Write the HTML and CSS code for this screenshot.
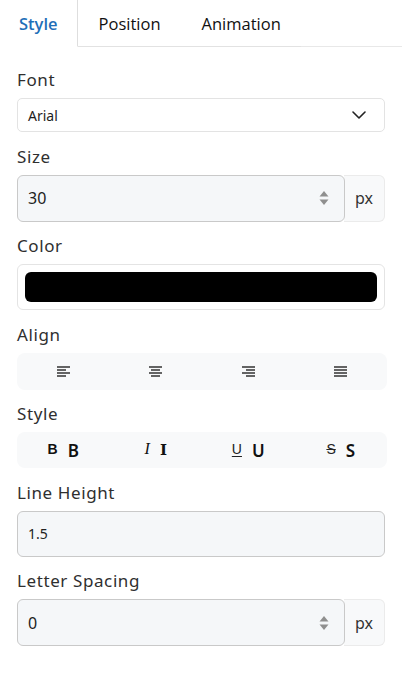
FILE: index.html
```html
<!DOCTYPE html>
<html>
<head>
<meta charset="utf-8">
<link rel="stylesheet" href="styles.css">
</head>
<body>
<div class="panel">
  <div class="tabs">
    <div class="tab active">Style</div>
    <div class="tab">Position</div>
    <div class="tab">Animation</div>
    <div class="tab-fill"></div>
  </div>
  <div class="content">
    <div class="group">
      <div class="label">Font</div>
      <div class="select">
        <span class="select-text">Arial</span>
        <svg class="chev" width="14" height="8" viewBox="0 0 14 8"><path d="M1 1l6 6 6-6" fill="none" stroke="#222" stroke-width="1.6" stroke-linecap="round" stroke-linejoin="round"/></svg>
      </div>
    </div>
    <div class="group">
      <div class="label">Size</div>
      <div class="input-group">
        <div class="input num">
          <span class="val">30</span>
          <svg class="spin" width="10" height="16" viewBox="0 0 10 16"><path d="M5 1L9.5 6.5H0.5Z" fill="#8f8f8f"/><path d="M5 15L9.5 9.5H0.5Z" fill="#8f8f8f"/></svg>
        </div>
        <div class="addon">px</div>
      </div>
    </div>
    <div class="group">
      <div class="label">Color</div>
      <div class="color-box"><div class="swatch"></div></div>
    </div>
    <div class="group">
      <div class="label">Align</div>
      <div class="btn-bar align-bar">
        <div class="btn"><svg width="13" height="11" viewBox="0 0 13 11"><path d="M0 1h13M0 4h9M0 7h13M0 10h9" stroke="#333" stroke-width="1.3"/></svg></div>
        <div class="btn"><svg width="13" height="11" viewBox="0 0 13 11"><path d="M0 1h13M2 4h9M0 7h13M2 10h9" stroke="#333" stroke-width="1.3"/></svg></div>
        <div class="btn"><svg width="13" height="11" viewBox="0 0 13 11"><path d="M0 1h13M4 4h9M0 7h13M4 10h9" stroke="#333" stroke-width="1.3"/></svg></div>
        <div class="btn"><svg width="13" height="11" viewBox="0 0 13 11"><path d="M0 1h13M0 4h13M0 7h13M0 10h13" stroke="#333" stroke-width="1.3"/></svg></div>
      </div>
    </div>
    <div class="group">
      <div class="label">Style</div>
      <div class="btn-bar style-bar">
        <div class="btn"><span class="ico ico-b">B</span><span class="ltr">B</span></div>
        <div class="btn"><span class="ico ico-i">I</span><span class="ltr serif">I</span></div>
        <div class="btn"><span class="ico ico-u">U</span><span class="ltr">U</span></div>
        <div class="btn"><span class="ico ico-s">S</span><span class="ltr">S</span></div>
      </div>
    </div>
    <div class="group">
      <div class="label">Line Height</div>
      <div class="input full"><span class="val small">1.5</span></div>
    </div>
    <div class="group">
      <div class="label">Letter Spacing</div>
      <div class="input-group">
        <div class="input num">
          <span class="val">0</span>
          <svg class="spin" width="10" height="16" viewBox="0 0 10 16"><path d="M5 1L9.5 6.5H0.5Z" fill="#8f8f8f"/><path d="M5 15L9.5 9.5H0.5Z" fill="#8f8f8f"/></svg>
        </div>
        <div class="addon">px</div>
      </div>
    </div>
  </div>
</div>
</body>
</html>
```
FILE: styles.css
```css
html, body {
  margin: 0;
  padding: 0;
  background: #fff;
}
body {
  font-family: "Noto Sans", "DejaVu Sans", sans-serif;
  color: #2b2b2b;
}
.panel {
  width: 402px;
}
.tabs {
  display: flex;
  height: 47px;
}
.tab {
  box-sizing: border-box;
  height: 47px;
  display: flex;
  align-items: center;
  padding: 0 20px 0 21px;
  font-family: "Open Sans", "Noto Sans", sans-serif;
  font-size: 16.5px;
  color: #111;
  border-bottom: 1px solid #e2e2e2;
}
.tab.active {
  color: #1f6fb8;
  font-weight: 600;
  padding: 0 19px 0 19px;
  border-right: 1px solid #dedede;
  border-bottom: 1px solid transparent;
}
.tab-fill {
  flex: 1;
  border-bottom: 1px solid #e8e8e8;
}
.content {
  padding: 21px 17px 0 17px;
  display: flex;
  flex-direction: column;
  gap: 12.5px;
}
.group {
  display: flex;
  flex-direction: column;
  gap: 6px;
}
.label {
  font-size: 17px;
  line-height: 24px;
  color: #2f2f2f;
  letter-spacing: 0.6px;
}
.select {
  box-sizing: border-box;
  height: 34px;
  width: 368px;
  border: 1px solid #e3e3e3;
  border-radius: 5px;
  background: #fff;
  display: flex;
  align-items: center;
  justify-content: space-between;
  padding: 0 18px 0 10px;
}
.select-text {
  font-size: 14px;
  color: #1e1e1e;
}
.input-group {
  display: flex;
  width: 368px;
}
.input {
  box-sizing: border-box;
  height: 47px;
  background: #f5f7f9;
  border: 1px solid #c9c9c9;
  border-radius: 6px;
  display: flex;
  align-items: center;
  padding: 0 10px;
}
.input.num {
  width: 328px;
  justify-content: space-between;
  padding-right: 15px;
  position: relative;
  z-index: 1;
}
.input.full {
  width: 368px;
  height: 46px;
}
.val {
  font-size: 16px;
  color: #222;
}
.val.small {
  font-size: 14px;
}
.addon {
  box-sizing: border-box;
  width: 41px;
  height: 47px;
  margin-left: -1px;
  background: #f8f9fa;
  border: 1px solid #ebebeb;
  border-left: none;
  border-radius: 0 6px 6px 0;
  display: flex;
  align-items: center;
  justify-content: center;
  font-size: 16px;
  color: #333;
}
.color-box {
  box-sizing: border-box;
  width: 368px;
  height: 46px;
  border: 1px solid #e4e4e4;
  border-radius: 6px;
  background: #fff;
  padding: 7px;
}
.swatch {
  height: 100%;
  background: #000;
  border-radius: 6px;
}
.btn-bar {
  width: 370px;
  background: #f8f9fa;
  border-radius: 8px;
  display: grid;
  grid-template-columns: repeat(4, 1fr);
}
.align-bar {
  height: 37px;
}
.style-bar {
  height: 36px;
}
.btn {
  display: flex;
  align-items: center;
  justify-content: center;
  gap: 10px;
}
.btn svg {
  display: block;
}
.ico {
  font-family: "Liberation Sans", sans-serif;
  font-size: 14px;
  font-weight: 700;
  color: #111;
  position: relative;
  top: -1px;
}
.ico-i {
  font-family: "Liberation Serif", serif;
  font-style: italic;
  font-weight: 400;
  font-size: 16px;
}
.ico-u {
  font-weight: 400;
  font-size: 14px;
  text-decoration: underline;
  text-underline-offset: 2px;
  color: #222;
}
.ico-s {
  font-weight: 400;
  font-size: 14px;
  text-decoration: line-through;
  color: #222;
}
.ltr {
  font-family: "Noto Sans", sans-serif;
  font-size: 17px;
  font-weight: 600;
  color: #111;
}
.ltr.serif {
  font-family: "DejaVu Serif", serif;
  font-size: 15px;
  font-weight: 700;
}
```
